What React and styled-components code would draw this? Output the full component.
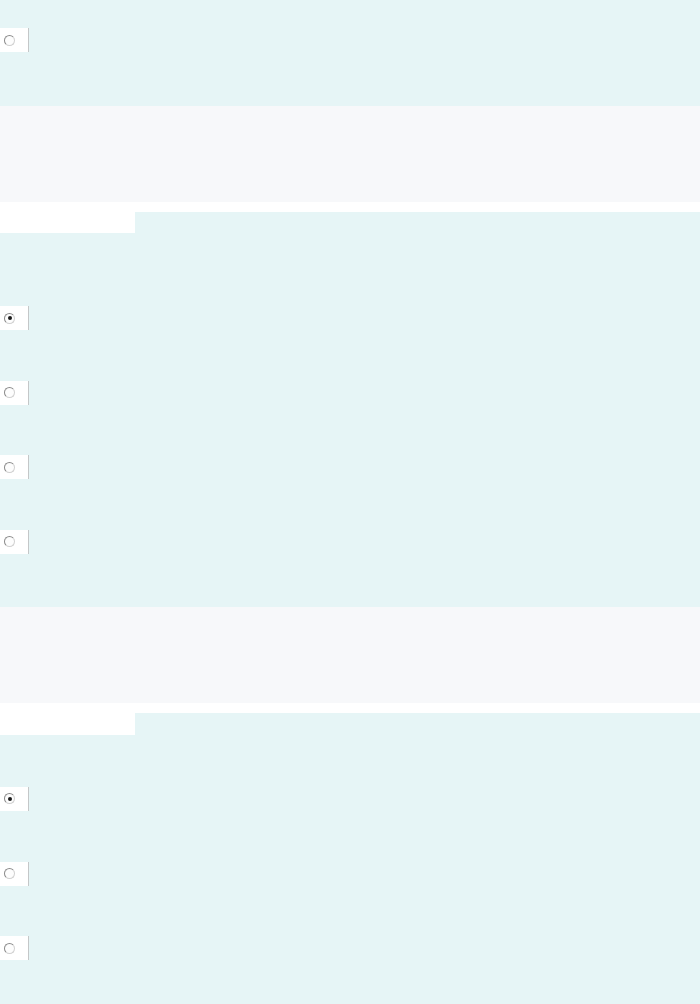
import { createGlobalStyle, styled } from "styled-components";

const GlobalStyle = createGlobalStyle`
  html, body {
    margin: 0;
    padding: 0;
    background: #e6f5f6;
    font-family: "Liberation Sans", Arial, sans-serif;
  }
`;

const Page = styled.div`
  display: flex;
  flex-direction: column;
  width: 700px;
  min-height: 1004px;
  background: #e6f5f6;
`;

const Question = styled.div`
  display: flex;
  flex-direction: column;
  gap: 50.67px;
  padding: ${(props) => props.$top}px 0 ${(props) => props.$bottom}px;
  background: #e6f5f6;
`;

const Divider = styled.div`
  height: 96px;
  background: #f7f8fa;
`;

const Strip = styled.div`
  height: 10px;
  background: #ffffff;
`;

const TabRow = styled.div`
  display: flex;
  height: ${(props) => props.$height}px;
`;

const Tab = styled.div`
  width: 135px;
  background: #ffffff;
`;

const Option = styled.label`
  display: flex;
  align-items: center;
  width: 29px;
  height: 24px;
  padding-left: 4px;
  box-sizing: border-box;
  background: #ffffff;
  border-right: 1px solid #c4c7c8;
`;

const Radio = styled.span`
  position: relative;
  width: 11px;
  height: 11px;
  box-sizing: border-box;
  border-radius: 50%;
  border: 1px solid #8a8a8a;
  border-right-color: #d0d0d0;
  border-bottom-color: #d0d0d0;
  background: #fdfdfd;

  &::after {
    content: "";
    display: ${(props) => (props.$checked ? "block" : "none")};
    position: absolute;
    left: 2.5px;
    top: 2.5px;
    width: 4px;
    height: 4px;
    border-radius: 50%;
    background: #1a1a1a;
  }
`;

function Choice({ checked }) {
  return (
    <Option>
      <Radio $checked={checked} />
    </Option>
  );
}

export default function App() {
  return (
    <Page>
      <GlobalStyle />
      <Question $top={28} $bottom={54}>
        <Choice />
      </Question>
      <Divider />
      <Strip />
      <TabRow $height={21}>
        <Tab />
      </TabRow>
      <Question $top={73} $bottom={53}>
        <Choice checked />
        <Choice />
        <Choice />
        <Choice />
      </Question>
      <Divider />
      <Strip />
      <TabRow $height={22}>
        <Tab />
      </TabRow>
      <Question $top={52} $bottom={20}>
        <Choice checked />
        <Choice />
        <Choice />
      </Question>
    </Page>
  );
}
